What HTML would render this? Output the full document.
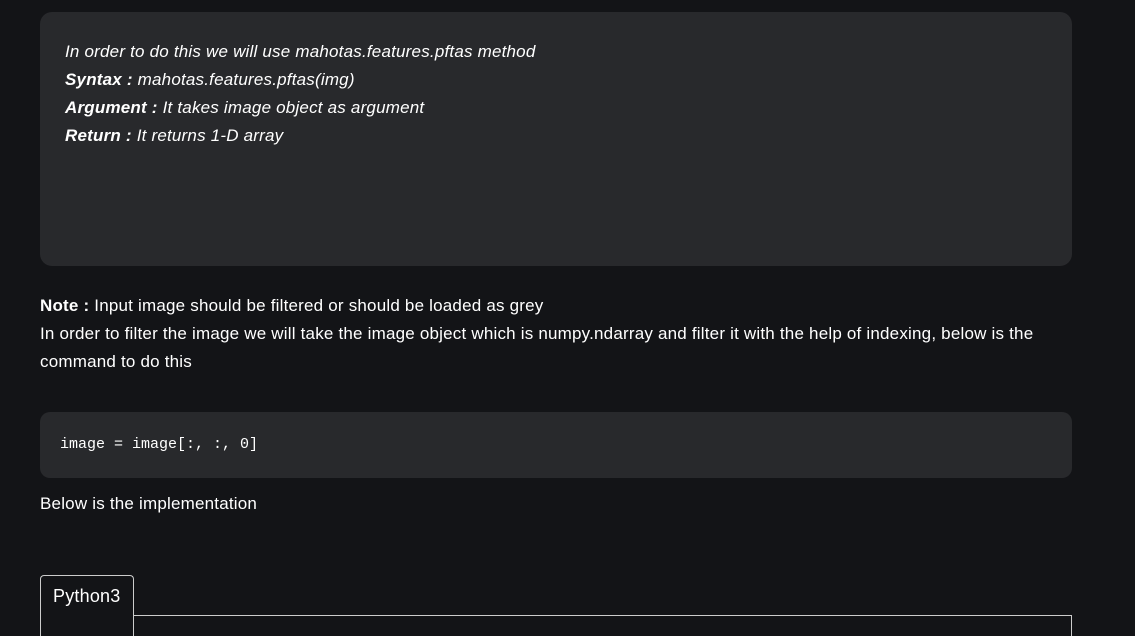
<!DOCTYPE html>
<html><head><style>
body{margin:0;background:#131417;width:1135px;height:627px;overflow:hidden;font-family:"Liberation Sans",sans-serif;color:#fff;}
.box{position:absolute;left:40px;width:1032px;background:#28292c;border-radius:12px;}
.t{position:absolute;font-size:17px;letter-spacing:0.2px;white-space:nowrap;}
.i{font-style:italic;}
</style></head><body>
<div class="box" style="top:12px;height:254px"></div>
<div class="t i" style="left:65px;top:42px">In order to do this we will use mahotas.features.pftas method</div>
<div class="t i" style="left:65px;top:70px"><b>Syntax :</b> mahotas.features.pftas(img)</div>
<div class="t i" style="left:65px;top:98px"><b>Argument :</b> It takes image object as argument</div>
<div class="t i" style="left:65px;top:126px"><b>Return :</b> It returns 1-D array</div>
<div class="t" style="left:40px;top:296px"><b>Note :</b> Input image should be filtered or should be loaded as grey</div>
<div class="t" style="left:40px;top:324px">In order to filter the image we will take the image object which is numpy.ndarray and filter it with the help of indexing, below is the</div>
<div class="t" style="left:40px;top:352px">command to do this</div>
<div class="box" style="top:412px;height:66px;border-radius:10px"></div>
<div class="t" style="left:60px;top:436px;font-family:'Liberation Mono',monospace;font-size:15px;letter-spacing:0">image = image[:, :, 0]</div>
<div class="t" style="left:40px;top:494px">Below is the implementation</div>
<div style="position:absolute;left:40px;top:575px;width:92px;height:60px;border:1px solid #ccc;border-bottom:none;border-radius:4px 4px 0 0;background:#131417"></div>
<div style="position:absolute;left:133px;top:615px;width:938px;height:20px;border-top:1px solid #ccc;border-right:1px solid #ccc"></div>
<div class="t" style="left:53px;top:586px;font-size:18px">Python3</div>
</body></html>
